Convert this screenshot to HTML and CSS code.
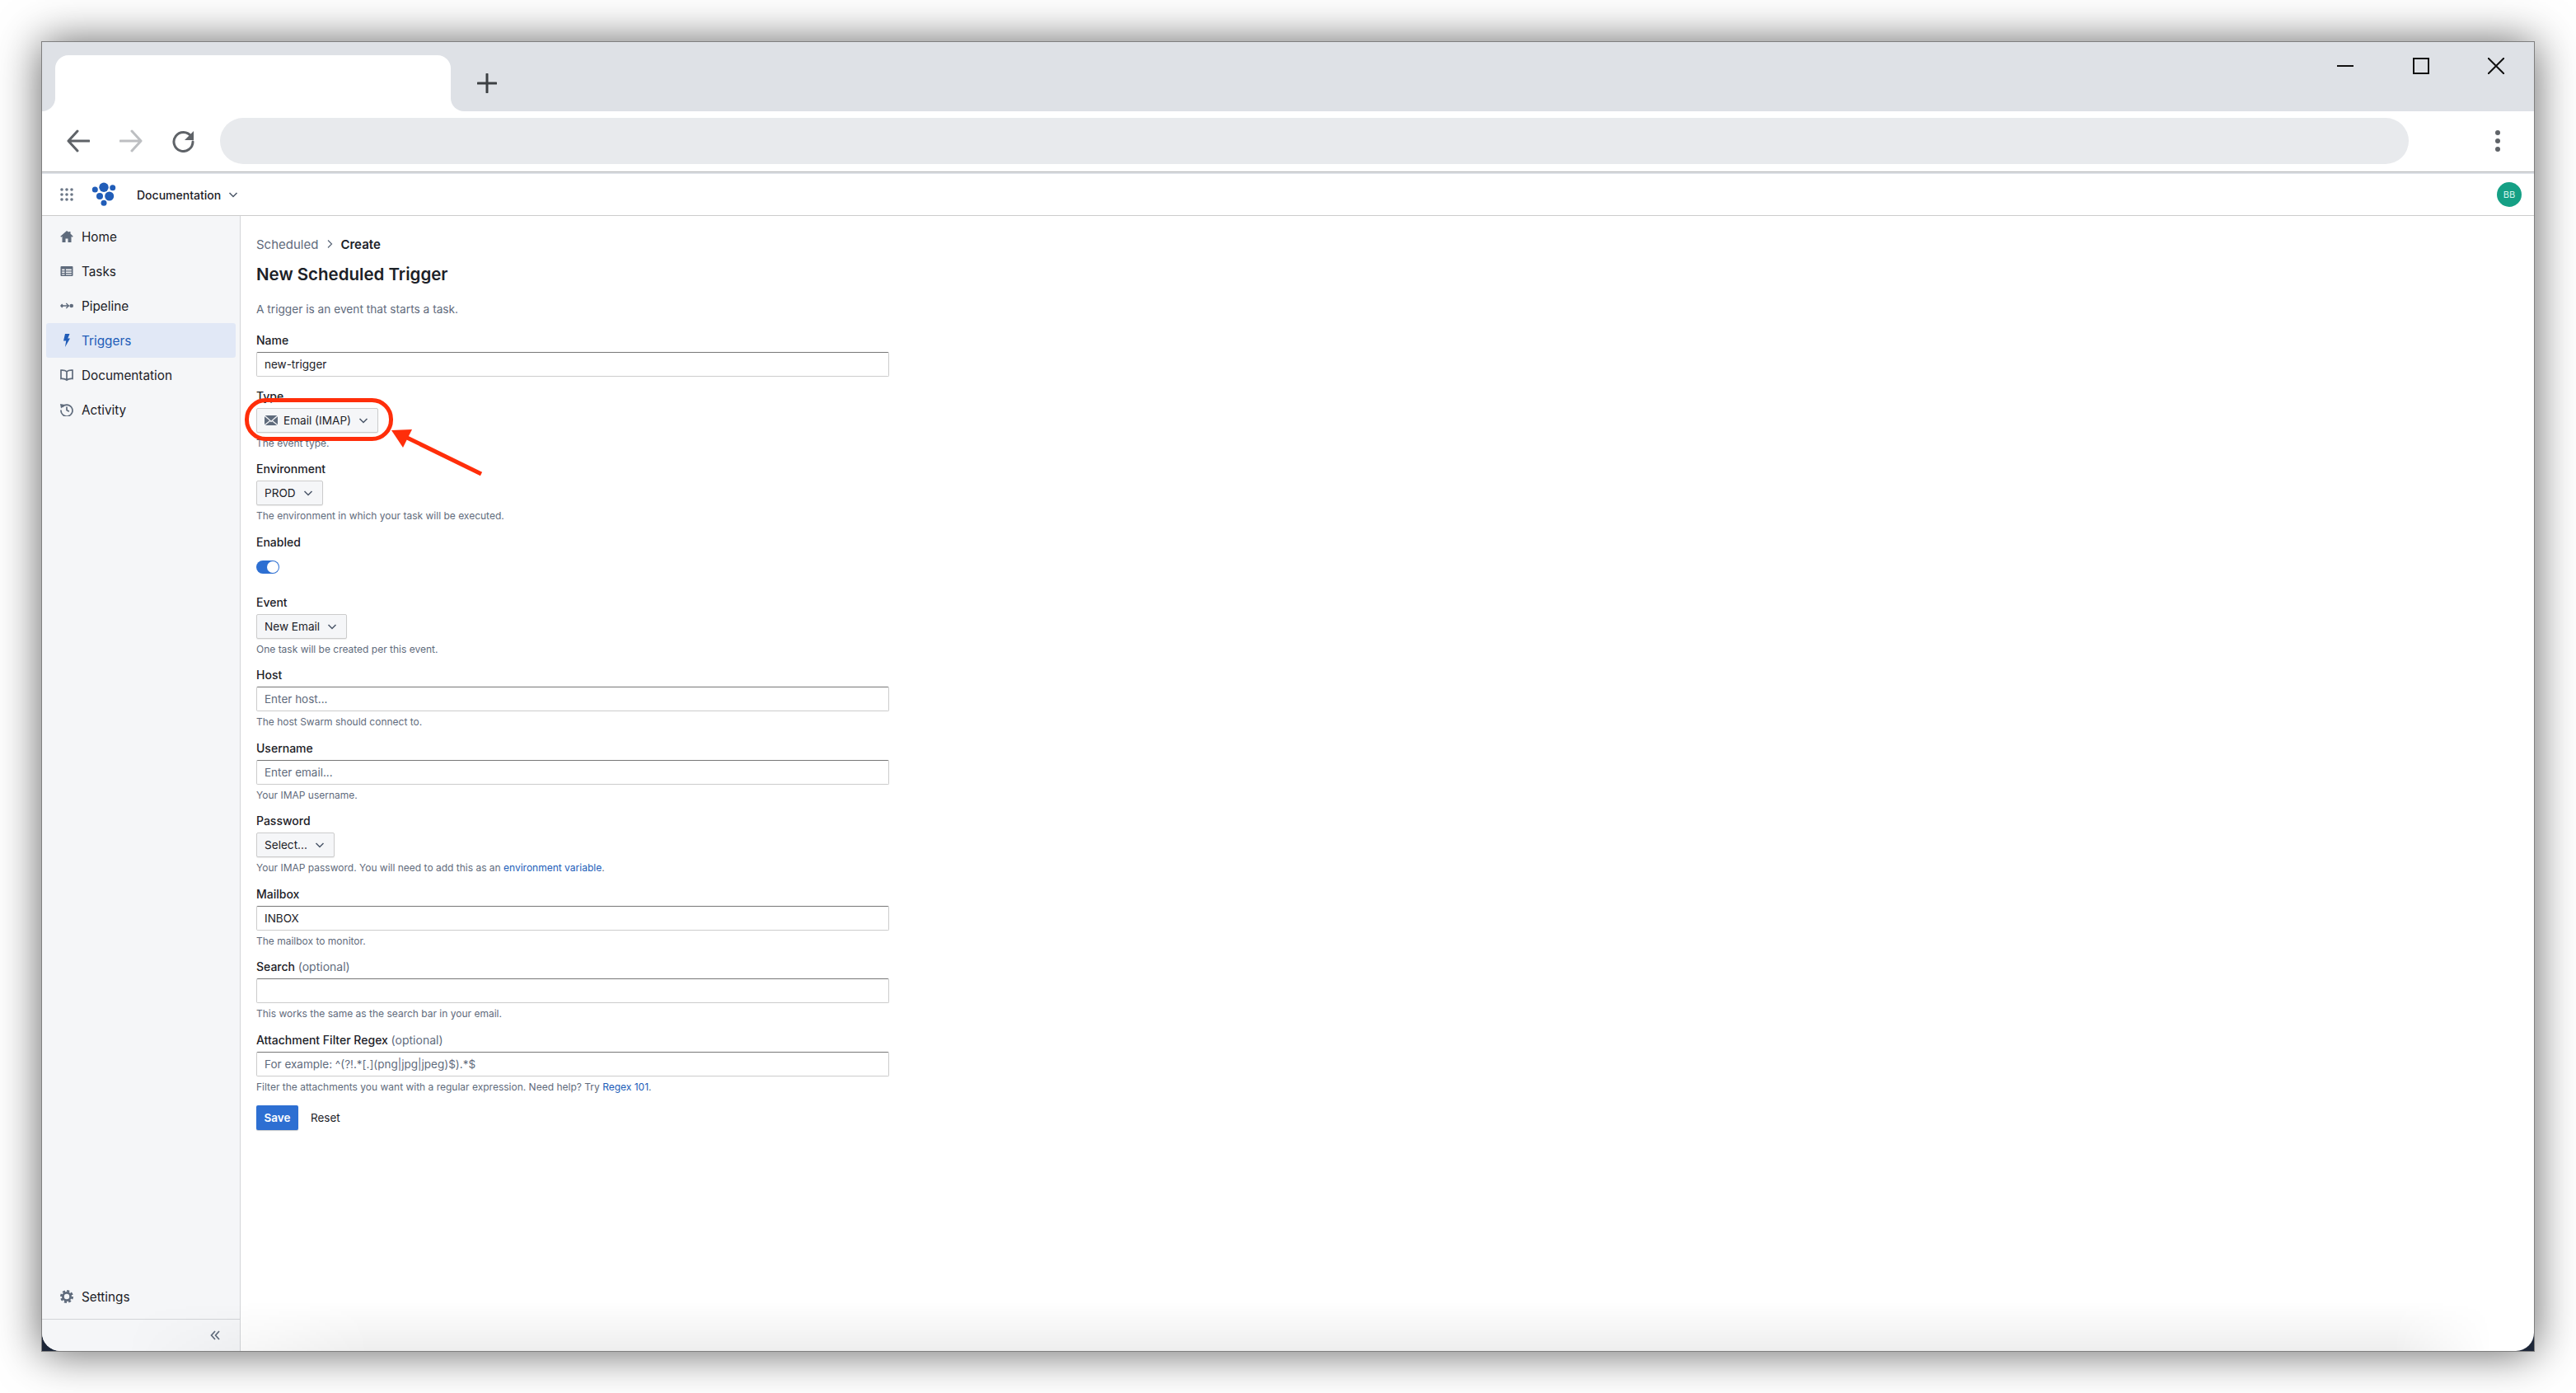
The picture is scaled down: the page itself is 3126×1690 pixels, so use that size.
FILE: index.html
```html
<!DOCTYPE html>
<html lang="en">
<head>
<meta charset="utf-8">
<title>New Scheduled Trigger</title>
<link rel="stylesheet" href="styles.css">
</head>
<body>
<div class="window">
  <div class="tabstrip">
    <div class="strip-left"></div>
    <div class="tabcol"><div class="tab"></div></div>
    <div class="strip-right">
      <svg class="newtab" viewBox="0 0 24 24"><path d="M12 1v22M1 12h22"/></svg>
      <div class="controls">
        <svg class="ctl" viewBox="0 0 20 20"><path d="M0 10h20"/></svg>
        <svg class="ctl" viewBox="0 0 20 20"><rect x="1" y="1" width="18" height="18"/></svg>
        <svg class="ctl" viewBox="0 0 20 20"><path d="M0 0l20 20M20 0L0 20"/></svg>
      </div>
    </div>
  </div>
  <div class="toolbar">
    <svg class="nav" viewBox="0 0 28 28"><path d="M27 14H3M13 2L2 14l11 12"/></svg>
    <svg class="nav nav-off" viewBox="0 0 28 28"><path d="M1 14h24M15 2l11 12-11 12"/></svg>
    <svg class="nav" viewBox="0 0 28 28"><path d="M23 8.500A11.500 11.500 0 1 0 25 15"/><path class="solid" d="M26 2v11H15z"/></svg>
    <div class="omnibox"></div>
    <svg class="dots" viewBox="0 0 6 26"><circle cx="3" cy="3" r="3"/><circle cx="3" cy="13" r="3"/><circle cx="3" cy="23" r="3"/></svg>
  </div>
  <div class="viewport">
    <header class="apphead">
      <svg class="grid" viewBox="0 0 16 16"><circle cx="2" cy="2" r="1.800"/><circle cx="8" cy="2" r="1.800"/><circle cx="14" cy="2" r="1.800"/><circle cx="2" cy="8" r="1.800"/><circle cx="8" cy="8" r="1.800"/><circle cx="14" cy="8" r="1.800"/><circle cx="2" cy="14" r="1.800"/><circle cx="8" cy="14" r="1.800"/><circle cx="14" cy="14" r="1.800"/></svg>
      <svg class="logo" viewBox="0 0 30 30"><circle cx="15" cy="6.300" r="5.700"/><circle cx="4.300" cy="9" r="3.500"/><circle cx="25.700" cy="6.700" r="3.500"/><circle cx="10" cy="17" r="4"/><circle cx="21.700" cy="17" r="5.500"/><circle cx="15" cy="25.300" r="3.500"/></svg>
      <span class="workspace">Documentation</span>
      <svg class="chev chev-head" viewBox="0 0 12 12"><path d="M1.500 4l4.500 4.500L10.500 4"/></svg>
      <div class="avatar">BB</div>
    </header>
    <div class="body">
      <aside class="sidebar">
        <nav class="menu">
          <a class="item"><svg class="ico" viewBox="0 0 16 16"><path d="M8 1L.3 7.800l.9 1L2.500 7.700V15h4v-4.500h3V15h4V7.700l1.300 1.100.9-1L12.500 4.500V2h-2v.8z"/></svg>Home</a>
          <a class="item"><svg class="ico" viewBox="0 0 16 16"><path fill-rule="evenodd" d="M1.500 2h13a1 1 0 0 1 1 1v10a1 1 0 0 1-1 1h-13a1 1 0 0 1-1-1V3a1 1 0 0 1 1-1zM2.200 5.500v1.700h3.300V5.500zm4.800 0v1.700h6.800V5.500zM2.200 8.500v1.500h3.300V8.500zm4.800 0v1.500h6.800V8.500zM2.200 11.200v1.300h3.300v-1.300zm4.800 0v1.300h6.800v-1.300z"/></svg>Tasks</a>
          <a class="item"><svg class="ico" viewBox="0 0 16 16"><path d="M0 8l2.200-2.400L4.400 8l-2.200 2.400z"/><circle cx="13.700" cy="8" r="2.300"/><path class="line" d="M4 8h7M7.300 5L10.300 8l-3 3"/></svg>Pipeline</a>
          <a class="item active"><svg class="ico" viewBox="0 0 16 16"><path d="M6 0h5.500L9.300 5.500H12L6 16l1.200-7.500H4z"/></svg>Triggers</a>
          <a class="item"><svg class="ico" viewBox="0 0 16 16"><path class="line wide" d="M8 3.800C6.500 2.500 3.500 2 1 2.200V12.500c2.500-.2 5.500.3 7 1.700 1.500-1.400 4.500-1.900 7-1.700V2.200C12.500 2 9.500 2.500 8 3.800zM8 3.800V14"/></svg>Documentation</a>
          <a class="item"><svg class="ico" viewBox="0 0 16 16"><path class="line wide" d="M2.300 5A7 7 0 1 1 1 8.500"/><path d="M0 1l5.500 1L1 6.500z"/><path class="line wide" d="M8 4.500V8.500l2.800 1.800"/></svg>Activity</a>
        </nav>
        <div class="sidefoot">
          <a class="item"><svg class="ico" viewBox="0 0 16 16"><circle class="ring" cx="8" cy="8" r="4.600"/><circle class="teeth" cx="8" cy="8" r="6.700"/></svg>Settings</a>
        </div>
        <div class="collapse"><svg class="dbl" viewBox="0 0 12 12"><path d="M6 1L1.500 6 6 11M11 1L6.500 6l4.500 5"/></svg></div>
      </aside>
      <main class="content">
        <div class="crumbs"><span class="crumb">Scheduled</span><svg class="crumbsep" viewBox="0 0 12 12"><path d="M4 1.500L8.500 6 4 10.500"/></svg><strong class="crumb-now">Create</strong></div>
        <h1 class="title">New Scheduled Trigger</h1>
        <p class="lead">A trigger is an event that starts a task.</p>
        <form class="form">
          <div class="field field-first"><label class="label">Name</label><input class="input" value="new-trigger"></div>
          <div class="field"><label class="label">Type</label>
            <div class="select"><svg class="mail" viewBox="0 0 16 12"><path d="M0 1.200L6 6.200 0 11zM16 1.200L10 6.200 16 11zM.8 0h14.400L8 6.500zM.8 12l6-4.800L8 8.300l1.200-1.100 6 4.800z"/></svg>Email (IMAP)<svg class="chev" viewBox="0 0 12 12"><path d="M1.500 4l4.500 4.500L10.500 4"/></svg></div>
            <p class="hint">The event type.</p></div>
          <div class="field"><label class="label">Environment</label>
            <div class="select">PROD<svg class="chev" viewBox="0 0 12 12"><path d="M1.500 4l4.500 4.500L10.500 4"/></svg></div>
            <p class="hint">The environment in which your task will be executed.</p></div>
          <div class="field field-toggle"><label class="label">Enabled</label><div class="toggle"><span class="knob"></span></div></div>
          <div class="field"><label class="label">Event</label>
            <div class="select">New Email<svg class="chev" viewBox="0 0 12 12"><path d="M1.500 4l4.500 4.500L10.500 4"/></svg></div>
            <p class="hint">One task will be created per this event.</p></div>
          <div class="field"><label class="label">Host</label><input class="input" placeholder="Enter host..."><p class="hint">The host Swarm should connect to.</p></div>
          <div class="field"><label class="label">Username</label><input class="input" placeholder="Enter email..."><p class="hint">Your IMAP username.</p></div>
          <div class="field"><label class="label">Password</label>
            <div class="select">Select...<svg class="chev" viewBox="0 0 12 12"><path d="M1.500 4l4.500 4.500L10.500 4"/></svg></div>
            <p class="hint">Your IMAP password. You will need to add this as an <a class="link">environment variable</a>.</p></div>
          <div class="field"><label class="label">Mailbox</label><input class="input" value="INBOX"><p class="hint">The mailbox to monitor.</p></div>
          <div class="field"><label class="label">Search <span class="opt">(optional)</span></label><input class="input"><p class="hint">This works the same as the search bar in your email.</p></div>
          <div class="field"><label class="label">Attachment Filter Regex <span class="opt">(optional)</span></label><input class="input" placeholder="For example: ^(?!.*[.](png|jpg|jpeg)$).*$"><p class="hint">Filter the attachments you want with a regular expression. Need help? Try <a class="link">Regex 101</a>.</p></div>
          <div class="actions"><button class="save" type="button">Save</button><button class="reset" type="button">Reset</button></div>
        </form>
      </main>
    </div>
    <div class="bottomfade"></div>
  </div>
</div>
<svg class="annotation" viewBox="0 0 3126 1690">
  <rect class="note-oval" x="299.500" y="485.500" width="175" height="47" rx="23"/>
  <path class="note-line" d="M584 575L494 531"/>
  <path class="note-head" d="M475 522L500 521L489 543z"/>
</svg>
</body>
</html>
```
FILE: styles.css
```css
* { box-sizing: border-box; }
html, body { margin: 0; height: 100%; background: #fff; overflow: hidden; }
body { position: relative; padding: 50px 50px 0; font-family: Inter, "Liberation Sans", sans-serif; color: #1c2127; }
p, h1 { margin: 0; }

.window { width: 3026px; height: 1590px; border: 1px solid #7f7f7f; background: #1d2638; display: flex; flex-direction: column; box-shadow: 0 1px 50px rgba(0,0,0,.62); }

.tabstrip { height: 84px; flex: none; display: flex; background: #fff; }
.strip-left { width: 16px; background: #dee1e6; border-bottom-right-radius: 16px; }
.tabcol { width: 480px; background: #dee1e6; padding-top: 16px; }
.tab { height: 68px; background: #fff; border-radius: 16px 16px 0 0; }
.strip-right { flex: 1; display: flex; align-items: flex-start; background: #dee1e6; border-bottom-left-radius: 16px; padding-right: 36px; }
.newtab { width: 24px; height: 24px; margin: 38px 0 0 32px; fill: none; stroke: #3c4043; stroke-width: 3; stroke-linecap: round; }
.controls { margin: 19px 0 0 auto; display: flex; gap: 71.5px; }
.ctl { width: 20px; height: 20px; fill: none; stroke: #111; stroke-width: 2; }

.toolbar { height: 73px; flex: none; display: flex; align-items: flex-start; padding: 8px 41px 0 30px; background: #fff; }
.nav { width: 28px; height: 28px; margin: 14px 36px 0 0; fill: none; stroke: #5f6368; stroke-width: 3; stroke-linecap: round; stroke-linejoin: round; flex: none; }
.nav:nth-of-type(3) { margin-right: 30px; }
.nav-off { stroke: #bdbfc2; }
.solid { fill: #5f6368; stroke: none; }
.omnibox { flex: 1; height: 56px; background: #e8eaed; border-radius: 28px; }
.dots { width: 6px; height: 26px; margin: 15px 0 0 105px; fill: #5f6368; flex: none; }

.viewport { flex: 1; min-height: 0; display: flex; flex-direction: column; position: relative; background: #fff; overflow: hidden; border-radius: 0 0 22px 22px; border-top: 1px solid #b5b6b8; }
.apphead { height: 53px; flex: none; display: flex; align-items: center; padding: 0 15px 0 22px; border-top: 2px solid #dee1e6; border-bottom: 1px solid #ccc; background: #fff; }
.grid { width: 16px; height: 16px; fill: #6b7686; flex: none; }
.logo { width: 30px; height: 30px; margin-left: 22px; fill: #215db8; flex: none; }
.workspace { margin-left: 25px; font-size: 14px; font-weight: 500; }
.chev { width: 12px; height: 12px; margin-left: 9px; fill: none; stroke: #4b5768; stroke-width: 1.500; flex: none; }
.chev-head { margin-left: 9px; }
.avatar { margin-left: auto; width: 30px; height: 30px; border-radius: 50%; background: #15a085; color: #d6f5ee; font-size: 11px; display: flex; align-items: center; justify-content: center; }

.body { flex: 1; min-height: 0; display: flex; }
.sidebar { width: 241px; flex: none; display: flex; flex-direction: column; background: #f5f6f8; border-right: 1px solid #d3d5d8; padding-top: 4px; }
.menu { flex: 1; padding: 0 5px; }
.item { height: 42px; display: flex; align-items: center; gap: 10px; padding-left: 17px; font-size: 15.300px; color: #1c2127; border-radius: 3px; }
.ico { width: 16px; height: 16px; fill: #5f6b7c; flex: none; }
.line { fill: none; stroke: #5f6b7c; stroke-width: 1.300; }
.wide { stroke-width: 1.700; }
.ring { fill: none; stroke: #5f6b7c; stroke-width: 2.800; }
.teeth { fill: none; stroke: #5f6b7c; stroke-width: 2.600; stroke-dasharray: 3 2.260; }
.active { background: #e1e8f6; color: #215db8; }
.active .ico { fill: #215db8; }
.sidefoot { padding: 0 5px 6px; }
.collapse { height: 39px; flex: none; border-top: 1px solid #d3d5d8; display: flex; align-items: center; justify-content: flex-end; padding-right: 24px; }
.dbl { width: 12px; height: 12px; fill: none; stroke: #5f6b7c; stroke-width: 1.700; }

.content { flex: 1; padding: 24px 0 0 19px; min-width: 0; }
.crumbs { display: flex; align-items: center; height: 20px; font-size: 15px; }
.crumb { color: #5f6b7c; }
.crumbsep { width: 12px; height: 12px; margin: 0 7px 0 8px; fill: none; stroke: #5f6b7c; stroke-width: 1.300; }
.crumb-now { font-weight: 600; }
.title { font-size: 20.500px; font-weight: 600; line-height: 30px; margin-top: 12px; }
.lead { font-size: 13.700px; line-height: 18px; margin-top: 18px; color: #5f6b7c; }
.form { width: 768px; margin-top: 20px; }
.field { margin-bottom: 15.500px; }
.field-first { margin-bottom: 14.500px; }
.field-toggle { margin-bottom: 26px; }
.label { display: block; font-size: 14px; font-weight: 500; line-height: 18px; margin-bottom: 5px; }
.opt { font-weight: 400; color: #5f6b7c; }
.input { display: block; width: 100%; height: 30px; padding: 0 9px; font: 400 13.500px Inter, "Liberation Sans", sans-serif; color: #1c2127; background: #fff; border: 1px solid #ccc; border-top-color: #777; border-radius: 2px; outline: none; }
.input::placeholder { color: #5f6b7c; opacity: 1; }
.select { display: inline-flex; align-items: center; height: 30px; vertical-align: top; padding: 0 11px 0 9px; font-size: 13.600px; background: #f5f6f8; border: 1px solid #ccc; border-radius: 2px; box-shadow: 0 1px 1px rgba(0,0,0,.08); }
.mail { width: 16px; height: 12px; margin-right: 7px; fill: #5f6b7c; }
.hint { font-size: 12px; line-height: 14px; margin-top: 6px; color: #5f6b7c; }
.link { color: #215db8; }
.toggle { width: 28px; height: 16px; margin-top: 13px; border-radius: 8px; background: #2d6fd2; display: flex; align-items: center; justify-content: flex-end; padding-right: 1px; }
.knob { width: 14px; height: 14px; border-radius: 50%; background: #fff; }
.actions { display: flex; align-items: center; gap: 15px; }
.save { width: 51px; height: 30px; padding: 0; background: #2d6fd2; color: #fff; border: 0; border-radius: 2px; font: 600 13.500px Inter, "Liberation Sans", sans-serif; box-shadow: 0 1px 1px rgba(0,0,0,.2); }
.reset { padding: 0; background: none; border: 0; color: #1c2127; font: 400 13.500px Inter, "Liberation Sans", sans-serif; }

.bottomfade { position: absolute; left: 0; right: 0; bottom: 0; height: 60px; pointer-events: none; background: linear-gradient(to top, rgba(0,0,0,.065), rgba(0,0,0,0)); -webkit-mask-image: linear-gradient(to right, transparent 100px, #000 400px, #000 calc(100% - 170px), transparent calc(100% - 50px)); mask-image: linear-gradient(to right, transparent 100px, #000 400px, #000 calc(100% - 170px), transparent calc(100% - 50px)); }

.annotation { position: absolute; left: 0; top: 0; width: 3126px; height: 1690px; pointer-events: none; }
.note-oval { fill: none; stroke: #ff2e0a; stroke-width: 5; }
.note-line { fill: none; stroke: #ff2e0a; stroke-width: 5; }
.note-head { fill: #ff2e0a; }
```
